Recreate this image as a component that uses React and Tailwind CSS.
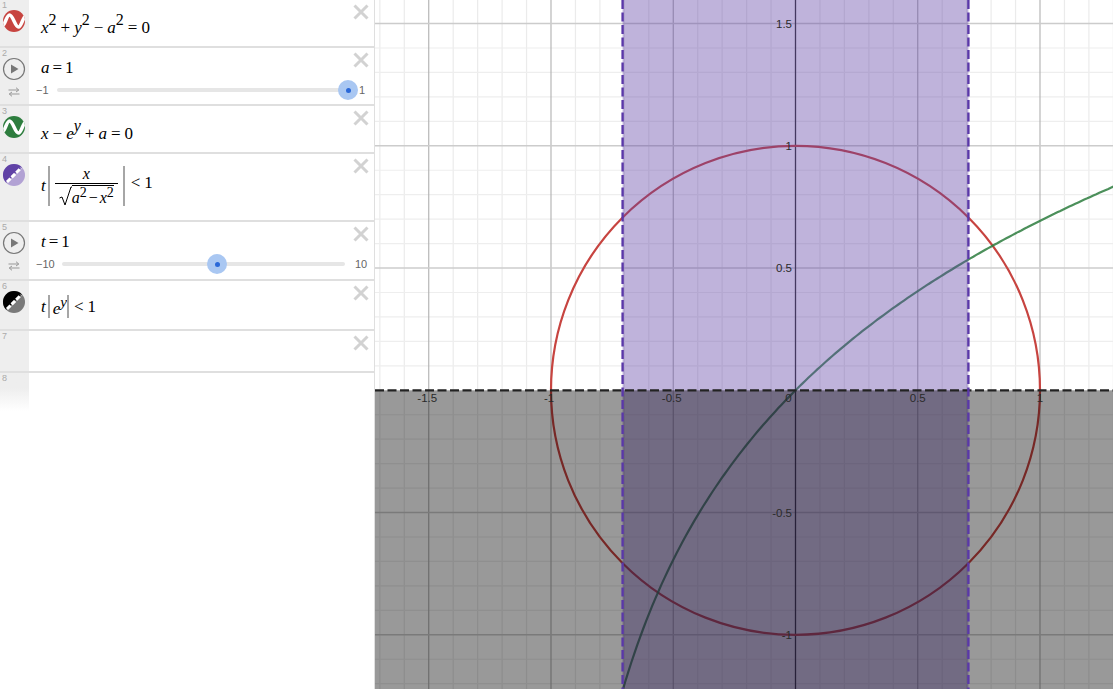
const serif = "font-['Liberation_Serif',serif]";
const sans = "font-['Liberation_Sans',Arial,sans-serif]";

const I = ({ children }) => <span className="italic">{children}</span>;
const Sup = ({ children }) => <span className="align-[8px] text-[16px] leading-none">{children}</span>;
const Op = ({ children }) => <span className="mx-[4px]">{children}</span>;
const OpS = ({ children }) => <span className="mx-[3px]">{children}</span>;

function CloseX() {
  return (
    <svg width="16" height="16" viewBox="0 0 16 16" className="shrink-0 mt-[4px] mr-[5px]">
      <path d="M1.5 1.5 L14.5 14.5 M14.5 1.5 L1.5 14.5" stroke="#d2d2d2" strokeWidth="3" fill="none" />
    </svg>
  );
}

function WaveIcon({ color }) {
  const id = "c" + color.slice(1);
  return (
    <svg width="24" height="24" viewBox="0 0 24 24" className="ml-[2px]">
      <defs>
        <clipPath id={id}><circle cx="12" cy="12" r="11" /></clipPath>
      </defs>
      <circle cx="12" cy="12" r="11" fill={color} />
      <path d="M0 17 C3 17 4.5 6 7.5 6 C11 6 13 18 16.5 18 C19.5 18 21 7 24 7" stroke="#fff" strokeWidth="3.5" fill="none" clipPath={`url(#${id})`} />
    </svg>
  );
}

function HalfIcon({ a, b }) {
  return (
    <svg width="24" height="24" viewBox="0 0 24 24" className="ml-[2px]">
      <circle cx="12" cy="12" r="11" fill={b} />
      <path d="M4.2 19.8 A11 11 0 0 1 19.8 4.2 Z" fill={a} />
      <path d="M5 19 L19 5" stroke="#fff" strokeWidth="3" strokeDasharray="5 1.5" fill="none" />
    </svg>
  );
}

function PlayStack() {
  return (
    <div className="flex flex-col ml-[2px]">
      <svg width="24" height="24" viewBox="0 0 24 24">
        <circle cx="12" cy="12" r="10.5" fill="none" stroke="#777" strokeWidth="1.2" />
        <path d="M9 7.5 L16.5 12 L9 16.5 Z" fill="#777" />
      </svg>
      <svg width="12" height="10" viewBox="0 0 12 10" className="mt-[6px] ml-[6px]">
        <path d="M0.5 3 H10.5 M8 0.7 L10.8 3 L8 5 M11.5 7 H1.5 M4 5 L1.2 7 L4 9.3" stroke="#999" strokeWidth="1" fill="none" />
      </svg>
    </div>
  );
}

function Slider({ min, minW, trackW, thumb }) {
  return (
    <div className={`flex items-center h-[20px] text-[11px] text-[#666] ${sans}`}>
      <span style={{ width: minW }} className="text-left leading-none">{min}</span>
      <div className="relative h-[4px] bg-[#e6e6e6] rounded-full" style={{ width: trackW }}>
        <span className="absolute top-[-8px] w-[20px] h-[20px] rounded-full bg-[#a9c7f2] flex items-center justify-center" style={{ left: thumb - 10 }}>
          <span className="w-[5px] h-[5px] rounded-full bg-[#2a68d8]" />
        </span>
      </div>
    </div>
  );
}

function Row({ n, h, icon, border = true, fade = false, children }) {
  return (
    <div className={`flex shrink-0 box-border ${border ? "border-b-2 border-[#dfdfdf]" : ""}`} style={{ height: h }}>
      <div className={`w-[29px] shrink-0 flex flex-col ${fade ? "bg-gradient-to-b from-[#eeeeee] from-[40%] to-white h-[38px]" : "bg-[#eeeeee]"}`}>
        <span className={`text-[9px] leading-[9px] pl-[2px] pt-[1px] h-[9px] text-[#aaa] ${sans}`}>{n}</span>
        {icon}
      </div>
      <div className="flex-1 min-w-0 pl-[12px]">{children}</div>
      {!fade && <CloseX />}
    </div>
  );
}

function Expr({ pt, children }) {
  return (
    <div className={`flex items-baseline whitespace-nowrap text-[17px] leading-[20px] text-black ${serif}`} style={{ paddingTop: pt }}>
      <span>{children}</span>
    </div>
  );
}

function Bar({ h }) {
  return <span className="block w-[2px] bg-[#a6a6a6] shrink-0" style={{ height: h }} />;
}

function ExprPanel() {
  return (
    <div className="w-[375px] shrink-0 h-full border-r border-[#dfdfdf] bg-white flex flex-col overflow-hidden">
      <Row n="1" h={48} icon={<WaveIcon color="#c74440" />}>
        <Expr pt={12}><I>x</I><Sup>2</Sup><Op>+</Op><I>y</I><Sup>2</Sup><Op>−</Op><I>a</I><Sup>2</Sup><Op>=</Op>0</Expr>
      </Row>
      <Row n="2" h={58} icon={<PlayStack />}>
        <Expr pt={10}><I>a</I><OpS>=</OpS>1</Expr>
        <div className="mt-[2px] -ml-[5px] -mr-[20px]">
          <div className="flex items-center">
            <Slider min="−1" minW={21} trackW={292} thumb={291} />
            <span className={`ml-[10px] text-[11px] text-[#666] leading-none ${sans}`}>1</span>
          </div>
        </div>
      </Row>
      <Row n="3" h={48} icon={<WaveIcon color="#2d7d3e" />}>
        <Expr pt={12}><I>x</I><Op>−</Op><I>e</I><Sup><I>y</I></Sup><Op>+</Op><I>a</I><Op>=</Op>0</Expr>
      </Row>
      <Row n="4" h={68} icon={<HalfIcon a="#6042a6" b="#b2a2d4" />}>
        <div className={`flex items-center text-[17px] text-black pt-[12px] ${serif}`}>
          <I>t</I>
          <span className="ml-[2px]"><Bar h={40} /></span>
          <div className="flex flex-col items-center ml-[5px] w-[63px] text-[16px] leading-none -mt-[1px]">
            <span className="italic h-[17px]">x</span>
            <span className="h-[1px] w-full bg-black" />
            <span className="flex items-end h-[22px]">
              <svg width="13" height="20" viewBox="0 0 13 20" className="shrink-0">
                <path d="M0.5 12 L3 11 L6 19 L12 1 H13" stroke="#000" strokeWidth="1" fill="none" />
              </svg>
              <span className="border-t border-black leading-[17px] whitespace-nowrap text-[16px]">
                <I>a</I><span className="align-[6px] text-[14px] leading-none">2</span><span className="mx-[2px]">−</span><I>x</I><span className="align-[6px] text-[14px] leading-none">2</span>
              </span>
            </span>
          </div>
          <span className="ml-[5px]"><Bar h={40} /></span>
          <span className="ml-[6px] whitespace-nowrap -mt-[7px]">&lt;<span className="ml-[4px]">1</span></span>
        </div>
      </Row>
      <Row n="5" h={59} icon={<PlayStack />}>
        <Expr pt={10}><I>t</I><OpS>=</OpS>1</Expr>
        <div className="mt-[2px] -ml-[5px] -mr-[20px]">
          <div className="flex items-center">
            <Slider min="−10" minW={26} trackW={283} thumb={155} />
            <span className={`ml-[10px] text-[11px] text-[#666] leading-none ${sans}`}>10</span>
          </div>
        </div>
      </Row>
      <Row n="6" h={50} icon={<HalfIcon a="#000000" b="#7a7a7a" />}>
        <div className={`flex items-center text-[17px] text-black pt-[13px] ${serif}`}>
          <I>t</I>
          <span className="ml-[2px]"><Bar h={23} /></span>
          <span className="ml-[3px] whitespace-nowrap leading-[20px]"><I>e</I><span className="align-[7px] text-[15px] leading-none italic">y</span></span>
          <span className="ml-[0px]"><Bar h={23} /></span>
          <span className="ml-[5px] whitespace-nowrap">&lt;<span className="ml-[4px]">1</span></span>
        </div>
      </Row>
      <Row n="7" h={42} icon={null} />
      <Row n="8" h={60} icon={null} border={false} fade />
    </div>
  );
}

const W = 738;
const H = 689;
const OX = 420.5;
const OY = 390.3;
const UX = 244.5;
const UY = 244.5;

function Graph() {
  const minorX = [];
  const majorX = [];
  for (let i = -18; i <= 14; i++) {
    const x = OX + (i / 10) * UX;
    if (i === 0) continue;
    if (i % 5 === 0) majorX.push(x);
    else minorX.push(x);
  }
  const minorY = [];
  const majorY = [];
  for (let i = -13; i <= 16; i++) {
    const y = OY - (i / 10) * UY;
    if (i === 0) continue;
    if (i % 5 === 0) majorY.push(y);
    else minorY.push(y);
  }
  let curve = "";
  for (let px = OX - 173.2; px <= W + 3; px += 3) {
    const xv = (px - OX) / UX;
    const yv = Math.log(xv + 1);
    curve += (curve ? "L" : "M") + px.toFixed(1) + " " + (OY - yv * UY).toFixed(1) + " ";
  }
  const xl = [[-1.5, "-1.5", -1.5], [-1, "-1", -2], [-0.5, "-0.5", -1.5], [0.5, "0.5", 0], [1, "1", 0]];
  const yl = [[1.5, "1.5"], [1, "1"], [0.5, "0.5"], [-0.5, "-0.5"], [-1, "-1"]];
  const xL = OX - 172.9;
  const xR = OX + 172.9;
  return (
    <svg width={W} height={H} viewBox={`0 0 ${W} ${H}`} className="flex-1 block bg-white">
      {minorX.map((x, i) => <line key={i} x1={x} x2={x} y1={0} y2={H} stroke="#ebebeb" strokeWidth="1.2" />)}
      {minorY.map((y, i) => <line key={i} x1={0} x2={W} y1={y} y2={y} stroke="#eeeeee" strokeWidth="1.2" />)}
      {majorX.map((x, i) => <line key={i} x1={x} x2={x} y1={0} y2={H} stroke="#b0b0b0" strokeWidth="1.1" />)}
      {majorY.map((y, i) => <line key={i} x1={0} x2={W} y1={y} y2={y} stroke="#cccccc" strokeWidth="1.6" />)}
      <line x1={OX} x2={OX} y1={0} y2={H} stroke="#333" strokeWidth="1.3" />
      <circle cx={OX} cy={OY} r={UX} fill="none" stroke="#c74440" strokeWidth="2.2" />
      <path d={curve} fill="none" stroke="#2d7d3e" strokeWidth="2.2" strokeOpacity="0.85" />
      <rect x={xL} y={0} width={xR - xL} height={H} fill="#6042a6" fillOpacity="0.4" />
      <rect x={0} y={OY} width={W} height={H - OY} fill="#000" fillOpacity="0.4" />
      <line x1={0} x2={W} y1={OY} y2={OY} stroke="#222" strokeWidth="2.2" strokeDasharray="9 3.5" />
      <line x1={xL} x2={xL} y1={0} y2={H} stroke="#5a38a8" strokeWidth="2.4" strokeDasharray="9 3.5" />
      <line x1={xR} x2={xR} y1={0} y2={H} stroke="#5a38a8" strokeWidth="2.4" strokeDasharray="9 3.5" />
      <g fontFamily="'Liberation Sans',Arial,sans-serif" fontSize="11.5" fill="#2a2a2a">
        {xl.map(([v, t, d]) => <text key={t} x={OX + v * UX + d} y={402} textAnchor="middle">{t}</text>)}
        <text x={OX - 7} y={402} textAnchor="middle">0</text>
        {yl.map(([v, t]) => <text key={t} x={OX - 3.5} y={OY - v * UY + 4} textAnchor="end">{t}</text>)}
      </g>
    </svg>
  );
}

export default function App() {
  return (
    <div className="flex w-[1113px] h-[689px] overflow-hidden bg-white">
      <ExprPanel />
      <Graph />
    </div>
  );
}
